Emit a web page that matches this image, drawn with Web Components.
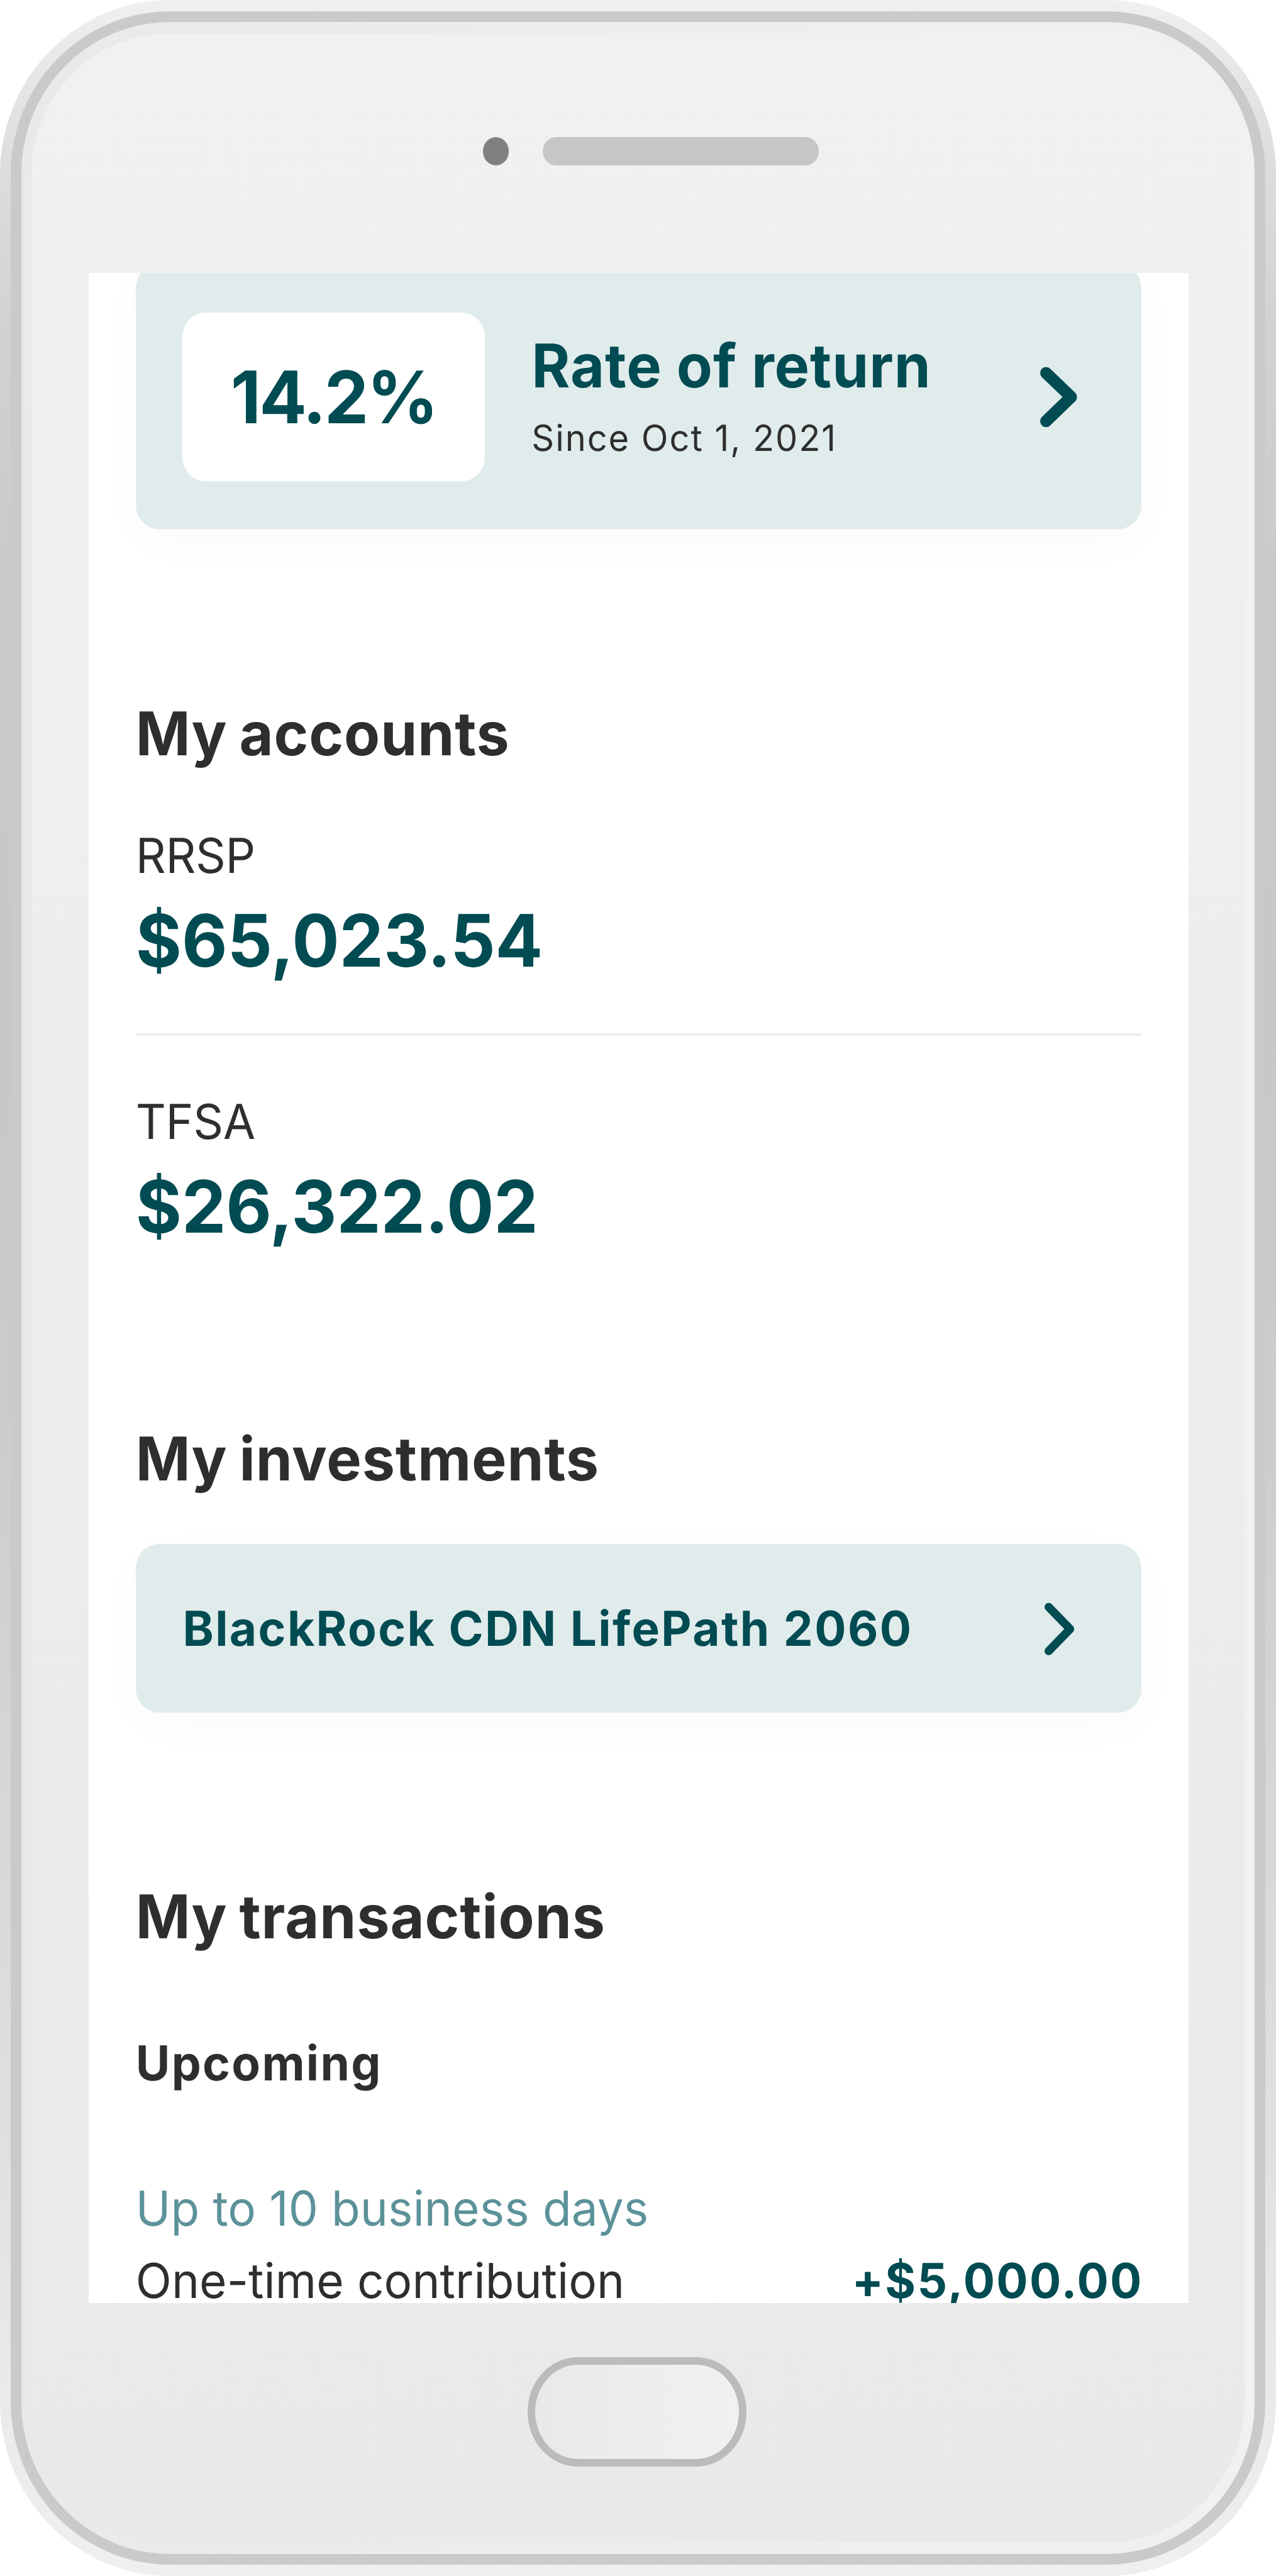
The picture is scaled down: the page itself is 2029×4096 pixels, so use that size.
<!DOCTYPE html>
<html lang="en">
<head>
<meta charset="utf-8">
<title>Accounts</title>
<style>
	html,
	body {
		margin: 0;
		background: #fff;
	}

	body {
		--u: 4.6632px;
		--teal: #014b52;
		--ink: #2e2e2e;
		--mint: #e0ecec;
		width: 2029px;
		height: 4096px;
		overflow: hidden;
		font-family: Inter, 'Liberation Sans', sans-serif;
		color: var(--ink);
		text-rendering: geometricPrecision;
	}
</style>
</head>
<body>

<phone-frame>
	<rate-card value="14.2%" heading="Rate of return" note="Since Oct 1, 2021"></rate-card>
	<page-section heading="My accounts">
		<account-row label="RRSP" amount="$65,023.54"></account-row>
		<account-row label="TFSA" amount="$26,322.02"></account-row>
	</page-section>
	<page-section heading="My investments">
		<fund-card>BlackRock CDN LifePath 2060</fund-card>
	</page-section>
	<page-section heading="My transactions">
		<transaction-list heading="Upcoming" when="Up to 10 business days">
			<transaction-row amount="+$5,000.00">One-time contribution</transaction-row>
		</transaction-list>
	</page-section>
</phone-frame>

<script>
class BaseElement extends HTMLElement {
	constructor() {
		super()
		this.attachShadow({ mode: 'open' })
	}

	connectedCallback() {
		this.shadowRoot.innerHTML = this.template()
	}

	attr(name) {
		return this.getAttribute(name) || ''
	}
}

class PhoneFrame extends BaseElement {
	template() {
		return `
			<style>
				:host {
					display: block;
					width: 2029px;
					height: 4096px;
				}

				div {
					box-sizing: border-box;
				}

				.edge {
					height: 100%;
					padding: 17.8px 17px;
					border-radius: 270px / 277px;
					background: linear-gradient(#f0f0f0 0%, #e6e6e6 3%, #dddddd 6.5%, #d2d2d2 12.5%, #cacaca 22%, #c7c7c7 40%, #cccccc 55%, #e0e0e0 83%, #eaeaea 93%, #efefef 100%);
				}

				.ring {
					height: 100%;
					padding: 17.6px 16.8px;
					border-radius: 253px / 259px;
					background: #cacaca;
				}

				.bevel {
					height: 100%;
					padding: 17.7px 16.5px;
					border-radius: 236px / 241px;
					background: linear-gradient(90deg, #e9e9e9, #f1f1f1);
				}

				.body {
					height: 100%;
					border-radius: 220px / 224px;
					background: linear-gradient(#f1f1f1, #e9e9e9);
				}

				.top {
					display: flex;
					gap: 53.5px;
					height: 381.2px;
					padding: 165.4px 0 0 717.6px;
				}

				.camera {
					width: 41.6px;
					height: 44.7px;
					border-radius: 50%;
					background: #808080;
				}

				.speaker {
					width: 438.7px;
					height: 44.7px;
					border-radius: 21px / 22.4px;
					background: #c6c6c6;
				}

				.screen {
					width: 1748.7px;
					height: 3227.5px;
					margin-left: 90.9px;
					overflow: hidden;
					background: #fff;
				}

				.content {
					padding: 0 calc(var(--u) * 16);
					margin-top: calc(var(--u) * -3.08);
					transform: scaleY(1.0278);
					transform-origin: 0 0;
				}

				.home {
					width: 348.3px;
					height: 173.6px;
					margin: 86.4px 0 0 788.8px;
					border: solid #bbbbbb;
					border-width: 12.8px 12.1px;
					border-radius: 80px / 86.8px;
					background: linear-gradient(90deg, #e9e9e9, #f1f1f1) padding-box;
				}
			</style>
			<div class="edge"><div class="ring"><div class="bevel"><div class="body">
				<div class="top">
					<div class="camera"></div>
					<div class="speaker"></div>
				</div>
				<div class="screen"><div class="content"><slot></slot></div></div>
				<div class="home"></div>
			</div></div></div></div>
		`
	}
}

class ChevronIcon extends BaseElement {
	template() {
		const bold = this.hasAttribute('bold')
		const w = bold ? 12.55 : 10.1
		const h = bold ? 20 : 17.4
		const r = bold ? 2 : 1.4
		return `
			<style>
				:host {
					display: block;
					flex: none;
				}

				svg {
					display: block;
					width: calc(var(--u) * ${w});
					height: calc(var(--u) * ${h});
					fill: none;
					stroke: var(--teal);
					stroke-width: ${r * 2};
					stroke-linecap: round;
					stroke-linejoin: round;
				}
			</style>
			<svg viewBox="0 0 ${w} ${h}" aria-hidden="true"><path d="M${r} ${r}L${w - r} ${h / 2}L${r} ${h - r}"/></svg>
		`
	}
}

class RateCard extends BaseElement {
	template() {
		return `
			<style>
				:host {
					display: flex;
					align-items: center;
					box-sizing: border-box;
					height: calc(var(--u) * 88);
					padding: 0 calc(var(--u) * 22) 0 calc(var(--u) * 16);
					border-radius: calc(var(--u) * 8);
					background: var(--mint);
					box-shadow: 0 calc(var(--u) * 4) calc(var(--u) * 16) rgba(0, 0, 0, 0.025);
				}

				.value {
					display: flex;
					align-items: center;
					justify-content: center;
					width: calc(var(--u) * 103);
					height: calc(var(--u) * 56);
					border-radius: calc(var(--u) * 8);
					background: #fff;
					color: var(--teal);
					font-size: calc(var(--u) * 24);
					font-weight: 700;
					letter-spacing: calc(var(--u) * -0.6);
				}

				.text {
					flex: 1;
					margin-left: calc(var(--u) * 16);
				}

				.heading {
					color: var(--teal);
					font-size: calc(var(--u) * 20);
					line-height: calc(var(--u) * 24);
					font-weight: 700;
					letter-spacing: calc(var(--u) * 0.2);
				}

				.note {
					margin-top: calc(var(--u) * 4);
					font-size: calc(var(--u) * 12);
					line-height: calc(var(--u) * 16);
					letter-spacing: calc(var(--u) * 0.42);
				}
			</style>
			<div class="value">${this.attr('value')}</div>
			<div class="text">
				<div class="heading">${this.attr('heading')}</div>
				<div class="note">${this.attr('note')}</div>
			</div>
			<chevron-icon bold></chevron-icon>
		`
	}
}

class PageSection extends BaseElement {
	template() {
		return `
			<style>
				:host {
					display: block;
					margin-top: calc(var(--u) * 56.1);
				}

				h2 {
					margin: 0;
					font-size: calc(var(--u) * 20);
					line-height: calc(var(--u) * 24);
					font-weight: 700;
					letter-spacing: calc(var(--u) * 0.2);
					word-spacing: calc(var(--u) * -0.9);
				}
			</style>
			<h2>${this.attr('heading')}</h2>
			<slot></slot>
		`
	}
}

class AccountRow extends BaseElement {
	template() {
		return `
			<style>
				:host {
					display: block;
					padding: calc(var(--u) * 16.4) 0 0;
				}

				:host(:not(:last-of-type)) {
					padding-bottom: calc(var(--u) * 14.8);
					border-bottom: var(--u) solid #ededed;
				}

				.label {
					font-size: calc(var(--u) * 16);
					line-height: calc(var(--u) * 24);
					letter-spacing: calc(var(--u) * -0.08);
				}

				.amount {
					color: var(--teal);
					font-size: calc(var(--u) * 24);
					line-height: calc(var(--u) * 32);
					font-weight: 700;
					letter-spacing: calc(var(--u) * -0.03);
				}
			</style>
			<div class="label">${this.attr('label')}</div>
			<div class="amount">${this.attr('amount')}</div>
		`
	}
}

class FundCard extends BaseElement {
	template() {
		return `
			<style>
				:host {
					display: flex;
					align-items: center;
					justify-content: space-between;
					box-sizing: border-box;
					height: calc(var(--u) * 56);
					margin-top: calc(var(--u) * 15.9);
					padding: calc(var(--u) * 0.4) calc(var(--u) * 23) 0 calc(var(--u) * 16);
					border-radius: calc(var(--u) * 8);
					background: var(--mint);
					box-shadow: 0 calc(var(--u) * 4) calc(var(--u) * 16) rgba(0, 0, 0, 0.025);
					color: var(--teal);
					font-size: calc(var(--u) * 16);
					font-weight: 700;
					letter-spacing: calc(var(--u) * 0.52);
				}
			</style>
			<span><slot></slot></span>
			<chevron-icon></chevron-icon>
		`
	}
}

class TransactionList extends BaseElement {
	template() {
		return `
			<style>
				:host {
					display: block;
					margin-top: calc(var(--u) * 24.4);
					font-size: calc(var(--u) * 16);
					line-height: calc(var(--u) * 24);
				}

				h3 {
					margin: 0 0 calc(var(--u) * 24.2);
					font-size: inherit;
					font-weight: 700;
					letter-spacing: calc(var(--u) * 0.5);
				}

				.when {
					color: #5c9299;
					letter-spacing: calc(var(--u) * 0.03);
				}
			</style>
			<h3>${this.attr('heading')}</h3>
			<div class="when">${this.attr('when')}</div>
			<slot></slot>
		`
	}
}

class TransactionRow extends BaseElement {
	template() {
		return `
			<style>
				:host {
					display: flex;
					justify-content: space-between;
					letter-spacing: calc(var(--u) * 0.02);
				}

				.amount {
					color: var(--teal);
					font-weight: 700;
					letter-spacing: calc(var(--u) * 0.49);
					margin-right: calc(var(--u) * -0.5);
				}
			</style>
			<span><slot></slot></span>
			<span class="amount">${this.attr('amount')}</span>
		`
	}
}

customElements.define('phone-frame', PhoneFrame)
customElements.define('chevron-icon', ChevronIcon)
customElements.define('rate-card', RateCard)
customElements.define('page-section', PageSection)
customElements.define('account-row', AccountRow)
customElements.define('fund-card', FundCard)
customElements.define('transaction-list', TransactionList)
customElements.define('transaction-row', TransactionRow)
</script>
</body>
</html>
